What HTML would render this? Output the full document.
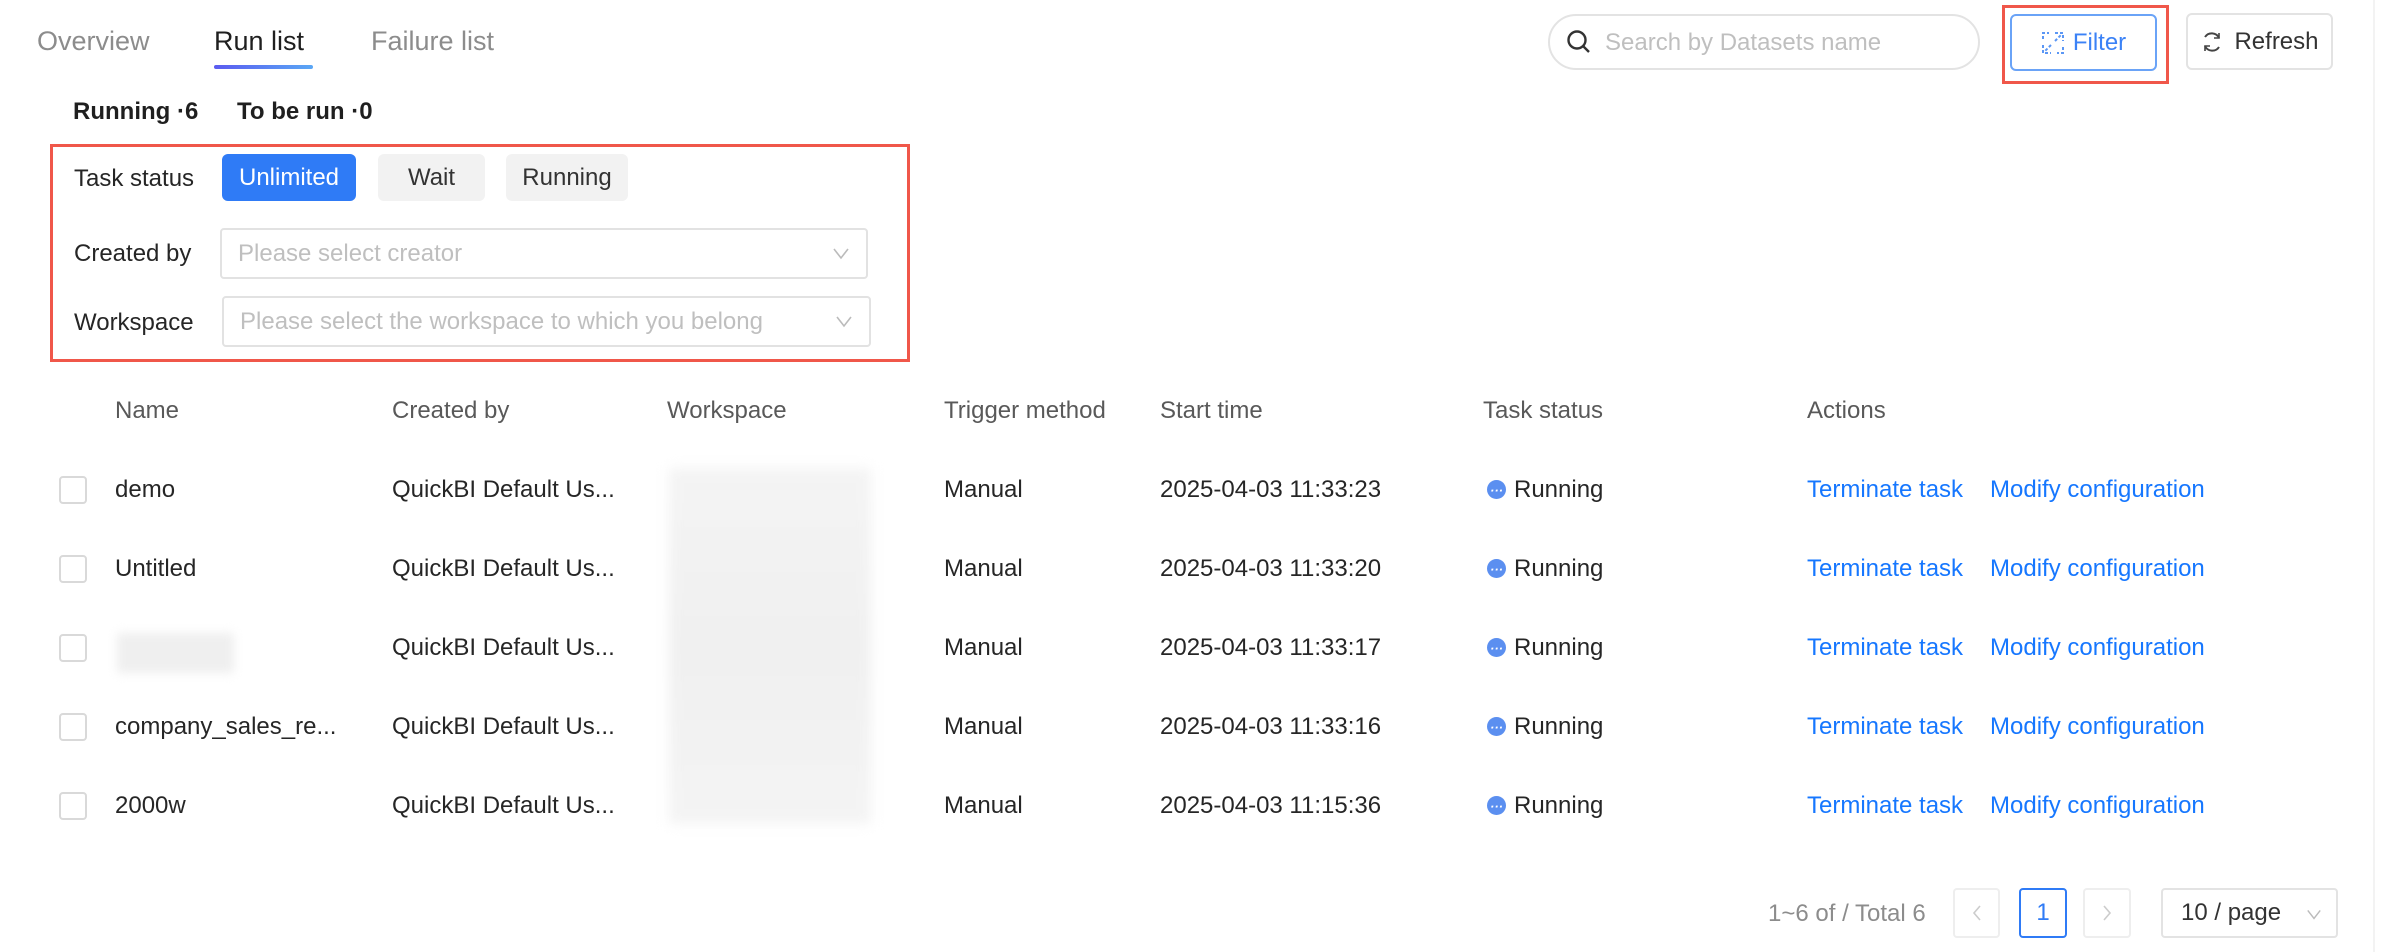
<!DOCTYPE html>
<html><head><meta charset="utf-8"><style>
*{box-sizing:border-box;margin:0;padding:0}
body{width:2384px;height:952px;background:#fff;font-family:"Liberation Sans",sans-serif;color:#262626;position:relative;overflow:hidden}
.a{position:absolute;white-space:nowrap}
.tab{font-size:27px;color:#8c8c8c;top:26px}
.t24{font-size:24px;line-height:28px}
.btn{position:absolute;border:2px solid #e3e3e3;border-radius:6px;background:#fff;display:flex;align-items:center;justify-content:center;font-size:24px}
.chip{position:absolute;top:154px;height:47px;border-radius:6px;background:#f2f2f2;font-size:24px;display:flex;align-items:center;justify-content:center;color:#333}
.sel{position:absolute;height:51px;border:2px solid #e2e2e2;border-radius:4px;font-size:24px;color:#bfbfbf;padding-left:16px;display:flex;align-items:center}
.chev{position:absolute;right:16px;top:14px;width:18px;height:18px}
.cb{position:absolute;left:59px;width:28px;height:28px;border:2px solid #d9d9d9;border-radius:4px}
.link{color:#1677ff}
.dot{display:inline-block;width:19px;height:19px;border-radius:50%;background:#5b8ff0;vertical-align:-2px;margin-right:8px;position:relative}
.dot:after{content:"···";position:absolute;left:3px;top:-3px;color:#fff;font-size:13px;font-weight:bold}
</style></head><body>
<div class="a tab" style="left:37px">Overview</div>
<div class="a tab" style="left:214px;color:#1f1f1f">Run list</div>
<div style="position:absolute;left:214px;top:65px;width:99px;height:4px;border-radius:2px;background:linear-gradient(90deg,#5b5bf0,#5aa7f5)"></div>
<div class="a tab" style="left:371px">Failure list</div>

<div style="position:absolute;left:1548px;top:14px;width:432px;height:56px;border:2px solid #e3e3e3;border-radius:28px"></div>
<svg class="a" style="left:1566px;top:29px" width="26" height="26" viewBox="0 0 26 26"><circle cx="11" cy="11" r="8.5" fill="none" stroke="#333" stroke-width="2.4"/><line x1="17" y1="17" x2="23" y2="23" stroke="#333" stroke-width="2.4"/></svg>
<div class="a t24" style="left:1605px;top:29px;color:#bfbfbf">Search by Datasets name</div>

<div style="position:absolute;left:2002px;top:5px;width:167px;height:79px;border:3px solid #f0574a"></div>
<div class="btn" style="left:2010px;top:14px;width:147px;height:57px;border-color:#6aa3f7;color:#3b82f6">
<svg width="24" height="24" viewBox="0 0 24 24" style="margin-right:8px" fill="none" stroke="#5b97f5" stroke-width="2"><path d="M2 8V2h6M22 16v6h-6M14 2h8v8M2 14v8h8M14 10l7-7M10 14l-7 7" stroke-dasharray="3 2"/></svg>Filter</div>
<div class="btn" style="left:2186px;top:13px;width:147px;height:57px;color:#333">
<svg width="24" height="24" viewBox="0 0 24 24" style="margin-right:10px" fill="none" stroke="#444" stroke-width="2"><path d="M19 8A8 8 0 0 0 5 7M5 16a8 8 0 0 0 14 1"/><path d="M19 3v5h-5M5 21v-5h5" stroke-width="1.6"/></svg>Refresh</div>

<div class="a t24" style="left:73px;top:98px;font-weight:bold;color:#1f1f1f">Running ·6</div>
<div class="a t24" style="left:237px;top:98px;font-weight:bold;color:#1f1f1f">To be run ·0</div>

<div style="position:absolute;left:50px;top:144px;width:860px;height:218px;border:3px solid #f0574a"></div>
<div class="a t24" style="left:74px;top:165px">Task status</div>
<div class="chip" style="left:222px;width:134px;background:#2f7bf6;color:#fff">Unlimited</div>
<div class="chip" style="left:378px;width:107px">Wait</div>
<div class="chip" style="left:506px;width:122px">Running</div>
<div class="a t24" style="left:74px;top:240px">Created by</div>
<div class="sel" style="left:220px;top:228px;width:648px">Please select creator<svg class="chev" viewBox="0 0 18 18"><path d="M2 5l7 9 7-9" fill="none" stroke="#bbb" stroke-width="1.6"/></svg></div>
<div class="a t24" style="left:74px;top:309px">Workspace</div>
<div class="sel" style="left:222px;top:296px;width:649px">Please select the workspace to which you belong<svg class="chev" viewBox="0 0 18 18"><path d="M2 5l7 9 7-9" fill="none" stroke="#bbb" stroke-width="1.6"/></svg></div>

<div class="t24" style="position:absolute;top:397px;left:0;width:2384px;color:#595959">
<span class="a" style="left:115px">Name</span><span class="a" style="left:392px">Created by</span><span class="a" style="left:667px">Workspace</span><span class="a" style="left:944px">Trigger method</span><span class="a" style="left:1160px">Start time</span><span class="a" style="left:1483px">Task status</span><span class="a" style="left:1807px">Actions</span></div>

<div style="position:absolute;left:669px;top:468px;width:202px;height:356px;background:linear-gradient(180deg,#f4f4f4,#f0f0f0 50%,#f4f4f4);filter:blur(6px)"></div>
<div style="position:absolute;left:117px;top:633px;width:117px;height:40px;background:#efefef;filter:blur(5px)"></div>

<div class="t24" style="position:absolute;left:0;top:476px;width:2384px">
<div style="position:absolute;top:0"><div class="cb" style="top:0"></div><span class="a" style="left:115px">demo</span><span class="a" style="left:392px">QuickBI Default Us...</span><span class="a" style="left:944px">Manual</span><span class="a" style="left:1160px">2025-04-03 11:33:23</span><span class="a" style="left:1487px"><i class="dot"></i>Running</span><span class="a link" style="left:1807px">Terminate task</span><span class="a link" style="left:1990px">Modify configuration</span></div>
<div style="position:absolute;top:79px"><div class="cb" style="top:0"></div><span class="a" style="left:115px">Untitled</span><span class="a" style="left:392px">QuickBI Default Us...</span><span class="a" style="left:944px">Manual</span><span class="a" style="left:1160px">2025-04-03 11:33:20</span><span class="a" style="left:1487px"><i class="dot"></i>Running</span><span class="a link" style="left:1807px">Terminate task</span><span class="a link" style="left:1990px">Modify configuration</span></div>
<div style="position:absolute;top:158px"><div class="cb" style="top:0"></div><span class="a" style="left:392px">QuickBI Default Us...</span><span class="a" style="left:944px">Manual</span><span class="a" style="left:1160px">2025-04-03 11:33:17</span><span class="a" style="left:1487px"><i class="dot"></i>Running</span><span class="a link" style="left:1807px">Terminate task</span><span class="a link" style="left:1990px">Modify configuration</span></div>
<div style="position:absolute;top:237px"><div class="cb" style="top:0"></div><span class="a" style="left:115px">company_sales_re...</span><span class="a" style="left:392px">QuickBI Default Us...</span><span class="a" style="left:944px">Manual</span><span class="a" style="left:1160px">2025-04-03 11:33:16</span><span class="a" style="left:1487px"><i class="dot"></i>Running</span><span class="a link" style="left:1807px">Terminate task</span><span class="a link" style="left:1990px">Modify configuration</span></div>
<div style="position:absolute;top:316px"><div class="cb" style="top:0"></div><span class="a" style="left:115px">2000w</span><span class="a" style="left:392px">QuickBI Default Us...</span><span class="a" style="left:944px">Manual</span><span class="a" style="left:1160px">2025-04-03 11:15:36</span><span class="a" style="left:1487px"><i class="dot"></i>Running</span><span class="a link" style="left:1807px">Terminate task</span><span class="a link" style="left:1990px">Modify configuration</span></div>
</div>

<div class="a t24" style="left:1768px;top:900px;color:#8c8c8c">1~6 of / Total 6</div>
<div class="btn" style="left:1953px;top:888px;width:47px;height:50px;border-color:#eee;border-radius:4px"><svg width="14" height="20" viewBox="0 0 14 20"><path d="M10 3L4 10l6 7" fill="none" stroke="#ccc" stroke-width="1.6"/></svg></div>
<div class="btn" style="left:2019px;top:888px;width:48px;height:50px;border-color:#2f7bf6;color:#2f7bf6;border-radius:4px">1</div>
<div class="btn" style="left:2083px;top:888px;width:48px;height:50px;border-color:#eee;border-radius:4px"><svg width="14" height="20" viewBox="0 0 14 20"><path d="M4 3l6 7-6 7" fill="none" stroke="#ccc" stroke-width="1.6"/></svg></div>
<div class="btn" style="left:2161px;top:888px;width:177px;height:50px;justify-content:flex-start;padding-left:18px;color:#333;border-radius:4px">10 / page<svg style="position:absolute;right:14px;top:16px" width="16" height="16" viewBox="0 0 18 18"><path d="M2 5l7 9 7-9" fill="none" stroke="#bbb" stroke-width="1.6"/></svg></div>
<div style="position:absolute;left:2373px;top:0;width:2px;height:952px;background:#f3f3f3"></div>
</body></html>
